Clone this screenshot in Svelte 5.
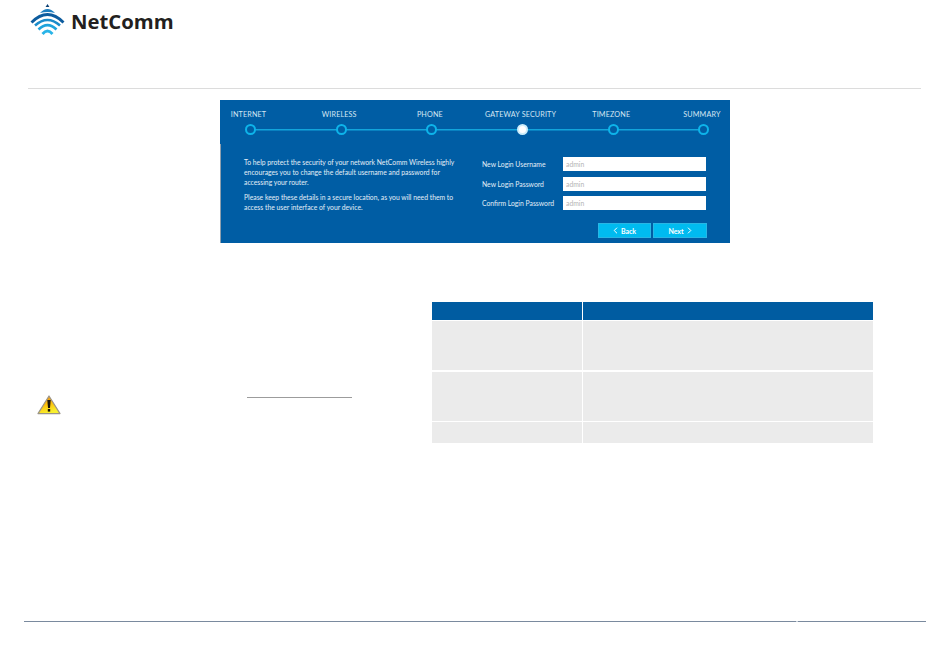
<script>
  const steps = [
    { name: "INTERNET" },
    { name: "WIRELESS" },
    { name: "PHONE" },
    { name: "GATEWAY SECURITY", active: true },
    { name: "TIMEZONE" },
    { name: "SUMMARY" },
  ];
  const fields = ["New Login Username", "New Login Password", "Confirm Login Password"];
</script>

<div class="page">
  <header class="top">
    <div class="logo">
      <svg width="37" height="33" viewBox="0 0 37 33">
        <path d="M18.5 1 L20.4 4 H16.6 Z" fill="#0b3f73" />
        <path d="M11 10 Q18.5 2 26 10 Q18.5 8 11 10 Z" fill="#1d7fc0" />
        <path d="M2.5 19.5 Q18.5 3.5 34.5 19.5" fill="none" stroke="#0d5c9e" stroke-width="2.8" />
        <path d="M6 22.5 Q18.5 11.5 31 22.5" fill="none" stroke="#1b8ccb" stroke-width="2.6" />
        <path d="M9.5 26.5 Q18.5 17.5 27.5 26.5" fill="none" stroke="#1ea3dc" stroke-width="2.6" />
        <path d="M13.5 31 Q18.5 25 23.5 31" fill="none" stroke="#29b4e8" stroke-width="2.8" />
      </svg>
      <span class="brand">NetComm</span>
    </div>
  </header>

  <section class="wizard">
    <div class="labels">
      {#each steps as s}
        <span class="label"><span>{s.name}</span></span>
      {/each}
    </div>
    <div class="track">
      {#each steps as s}
        <span class="dot" class:active={s.active}></span>
      {/each}
    </div>
    <div class="body">
      <div class="intro">
        <p>To help protect the security of your network NetComm Wireless highly encourages you to change the default username and password for accessing your router.</p>
        <p>Please keep these details in a secure location, as you will need them to access the user interface of your device.</p>
      </div>
      <div class="side">
        <div class="form">
          {#each fields as f}
            <div class="field">
              <label for={f}>{f}</label>
              <input id={f} type="text" placeholder="admin" />
            </div>
          {/each}
        </div>
        <div class="buttons">
          <button type="button">
            <svg width="5" height="7" viewBox="0 0 5 7"><path d="M4 .7 1.2 3.5 4 6.3" /></svg>
            Back
          </button>
          <button type="button">
            Next
            <svg width="5" height="7" viewBox="0 0 5 7"><path d="M1 .7 3.8 3.5 1 6.3" /></svg>
          </button>
        </div>
      </div>
    </div>
  </section>

  <section class="lower">
    <div class="note">
      <div class="link-line"></div>
      <svg class="warn" width="24" height="20" viewBox="0 0 24 20">
        <defs>
          <linearGradient id="warnfill" x1="0" y1="0" x2="0.35" y2="1">
            <stop offset="0" stop-color="#e8881a" />
            <stop offset="0.5" stop-color="#fdbb08" />
            <stop offset="1" stop-color="#f8f02e" />
          </linearGradient>
        </defs>
        <path d="M12 1 L23 18.6 H1 Z" fill="url(#warnfill)" stroke="#9a9488" stroke-width="1.2" stroke-linejoin="round" />
        <path d="M10.3 5 H13.7 L13 13 H11 Z" fill="#1a1408" />
        <rect x="10.8" y="14" width="2.4" height="2.6" fill="#1a1408" />
      </svg>
    </div>
    <table>
      <thead>
        <tr><th></th><th></th></tr>
      </thead>
      <tbody>
        <tr class="tall"><td></td><td></td></tr>
        <tr class="tall"><td></td><td></td></tr>
        <tr class="short"><td></td><td></td></tr>
      </tbody>
    </table>
  </section>

  <footer class="bottom"></footer>
</div>

<style>
  :global(body) {
    margin: 0;
    background: #fff;
  }
  .page {
    width: 950px;
    height: 660px;
    display: flex;
    flex-direction: column;
    box-sizing: border-box;
    font-family: Lato, "Liberation Sans", sans-serif;
  }
  .top {
    height: 88px;
    margin: 0 29px 0 28px;
    border-bottom: 1px solid #dcdcdc;
    box-sizing: content-box;
  }
  .logo {
    display: flex;
    align-items: flex-start;
    padding: 3px 0 0 1px;
  }
  .brand {
    margin: 2px 0 0 5px;
    font-family: "Open Sans", "Liberation Sans", sans-serif;
    font-weight: 700;
    font-size: 20.3px;
    line-height: 32px;
    color: #231f20;
  }
  .wizard {
    width: 510px;
    height: 143px;
    margin: 11px 0 0 220px;
    background: #005da4;
    display: flex;
    flex-direction: column;
    color: #fff;
  }
  .labels {
    display: flex;
    justify-content: space-between;
    padding: 0 27.5px 0 28px;
    height: 11px;
    margin-top: 9px;
    font-size: 7.2px;
    line-height: 11px;
    letter-spacing: 0.15px;
    color: #d6e6f3;
  }
  .label {
    width: 1px;
    display: flex;
    justify-content: center;
    white-space: nowrap;
  }
  .track {
    display: flex;
    justify-content: space-between;
    padding: 0 20.5px 0 25px;
    margin-top: 4px;
    height: 11px;
    background: linear-gradient(#12a5dc, #12a5dc) no-repeat 30px center / 454px 1.5px;
  }
  .dot {
    width: 11px;
    height: 11px;
    box-sizing: border-box;
    border: 2px solid #0db4ea;
    border-radius: 50%;
    background: #005da4;
  }
  .dot.active {
    background: #fff;
    border-color: #cdeefb;
  }
  .body {
    flex: 1;
    display: flex;
    border-left: 1px solid #8f9fae;
    margin-top: 9px;
    padding-left: 23px;
  }
  .intro {
    width: 215px;
    margin-right: 23px;
    padding-top: 13px;
    font-size: 6.8px;
    line-height: 10px;
    color: #e3eef7;
  }
  .intro p {
    margin: 0 0 5px;
  }
  .side {
    width: 225px;
    padding-top: 13px;
    display: flex;
    flex-direction: column;
  }
  .form {
    display: flex;
    flex-direction: column;
    gap: 5.5px;
  }
  .field {
    display: flex;
    align-items: center;
    height: 14px;
  }
  .field label {
    width: 81px;
    font-size: 6.8px;
    color: #e3eef7;
    white-space: nowrap;
  }
  .field input {
    width: 143px;
    height: 14px;
    box-sizing: border-box;
    border: 0;
    padding: 0 3px;
    background: #fff;
    font-family: inherit;
    font-size: 6.8px;
    outline: none;
  }
  .field input::placeholder {
    color: #b4b4b4;
    opacity: 1;
  }
  .buttons {
    display: flex;
    gap: 2px;
    margin: 13px 0 0 116px;
  }
  .buttons button {
    width: 53px;
    height: 15px;
    padding: 0;
    box-sizing: border-box;
    border: 1px solid #29b6e4;
    background: #00bbf0;
    color: #fff;
    font-family: inherit;
    font-weight: 700;
    font-size: 7px;
    display: flex;
    align-items: center;
    justify-content: center;
    gap: 3px;
  }
  .buttons button:last-child {
    width: 54px;
  }
  .buttons path {
    fill: none;
    stroke: #fff;
    stroke-width: 1;
  }
  .lower {
    display: flex;
    margin-top: 59px;
    padding-left: 37px;
  }
  .note {
    width: 395px;
    display: flex;
    flex-direction: column;
  }
  .link-line {
    width: 105px;
    height: 1px;
    background: #9c9c9c;
    margin: 95px 0 0 210px;
  }
  .warn {
    margin-top: -3px;
  }
  table {
    width: 441px;
    border-collapse: separate;
    border-spacing: 0;
    table-layout: fixed;
  }
  th,
  td {
    padding: 0;
    border: 0 solid #fff;
    border-left-width: 1px;
  }
  th:first-child,
  td:first-child {
    width: 150px;
    border-left: 0;
  }
  th {
    height: 18px;
    background: #005ca1;
  }
  td {
    background: #ebebeb;
    border-top-width: 1px;
  }
  .tall td {
    height: 49px;
  }
  .tall + .tall td {
    border-top-width: 2px;
  }
  .short td {
    height: 21px;
  }
  .bottom {
    margin: 178px 24px 0;
    height: 1px;
    background: linear-gradient(90deg, #7a8a9e 772px, #c9d2dc 772px, #c9d2dc 774px, #7a8a9e 774px);
  }
</style>
